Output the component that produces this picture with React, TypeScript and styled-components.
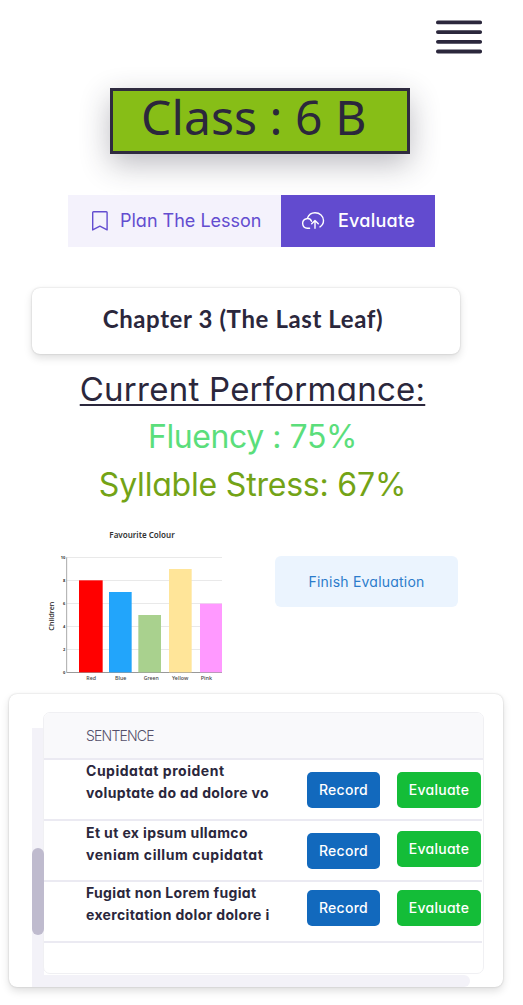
import React from 'react';
import styled, { createGlobalStyle } from 'styled-components';

const ink = '#2b273c';

const GlobalStyle = createGlobalStyle`
  *, *::before, *::after { box-sizing: border-box; }
  body {
    margin: 0;
    background: #fff;
    color: ${ink};
    font-family: Inter, "Liberation Sans", sans-serif;
    font-feature-settings: "cv11";
  }
  button { border: 0; padding: 0; font: inherit; font-feature-settings: inherit; cursor: pointer; }
`;

const Page = styled.main`
  width: 523px;
  height: 1005px;
  overflow: hidden;
  display: flex;
  flex-direction: column;
`;

const TopBar = styled.header`
  height: 88px;
  padding: 19px 39px 0 0;
  display: flex;
  justify-content: flex-end;
  align-items: flex-start;
`;

const MenuButton = styled.button`
  background: none;
  line-height: 0;
`;

const ClassBadge = styled.h1`
  margin: 0 0 0 110px;
  width: 300px;
  height: 66px;
  padding: 0 0 0 28px;
  border: 3px solid #2f2b3f;
  background: #87be17;
  box-shadow: 0 10px 30px rgba(47, 43, 63, 0.32);
  font: 400 48px/52px "Noto Sans", sans-serif;
  letter-spacing: 0.08px;
  white-space: nowrap;
`;

const Tabs = styled.nav`
  display: flex;
  margin: 41px 0 0 68px;
  height: 52px;
  position: relative;
`;

const Tab = styled.button<{ $active?: boolean }>`
  display: flex;
  align-items: center;
  width: ${(p) => (p.$active ? 154 : 213)}px;
  padding-left: ${(p) => (p.$active ? 20 : 23)}px;
  gap: ${(p) => (p.$active ? 13 : 11)}px;
  color: ${(p) => (p.$active ? '#fff' : '#634dd0')};
  background: ${(p) => (p.$active ? '#624bcf' : '#f4f2fc')};
  font-size: 18px;
  font-weight: ${(p) => (p.$active ? 500 : 400)};
  letter-spacing: ${(p) => (p.$active ? 0.25 : 0)}px;
  white-space: nowrap;
`;

const TabLabel = styled.span`
  padding-bottom: 1px;
`;

const Card = styled.section`
  background: #fff;
  border-radius: 8px;
  box-shadow: 0 0 2px rgba(0, 0, 0, 0.2), 0 4px 8px rgba(0, 0, 0, 0.13);
`;

const ChapterCard = styled(Card)`
  margin: 41px 0 0 32px;
  width: 428px;
  height: 66px;
  padding-right: 6px;
  font: 700 24px/62px Lato, sans-serif;
  letter-spacing: 0.6px;
  text-align: center;
`;

const Performance = styled.section`
  margin: 11px 0 0;
  padding-right: 18px;
  height: 144px;
`;

const Stat = styled.p<{ $color: string; $tracking: number; $size?: number; $underline?: boolean }>`
  margin: 0;
  text-align: center;
  font-size: ${(p) => p.$size ?? 32}px;
  line-height: 48px;
  font-weight: 400;
  color: ${(p) => p.$color};
  letter-spacing: ${(p) => p.$tracking}px;
  text-decoration: ${(p) => (p.$underline ? 'underline' : 'none')};
  text-decoration-thickness: 2px;
  text-underline-offset: 3px;
  text-decoration-skip-ink: none;
`;

const Summary = styled.section`
  display: flex;
  align-items: flex-start;
  margin-top: 11px;
  padding-left: 40px;
  height: 174px;
`;

const Chart = styled.svg`
  width: 200px;
  height: 170px;
  flex: none;
  font-family: "Noto Sans", sans-serif;
`;

const FinishButton = styled.button`
  margin: 36px 0 0 35px;
  width: 183px;
  height: 51px;
  padding-bottom: 1px;
  border-radius: 6px;
  background: #ebf4fe;
  color: #2b7ccb;
  font-size: 14px;
  letter-spacing: 0.22px;
`;

const TableCard = styled(Card)`
  margin-left: 9px;
  width: 494px;
  height: 293px;
  padding-left: 23px;
  overflow: hidden;
  display: grid;
  grid-template-columns: 11px 441px;
  grid-template-rows: 281px 12px;
`;

const VerticalTrack = styled.div`
  width: 12px;
  margin-top: 34px;
  padding-top: 120px;
  background: #f3f2f8;
`;

const Thumb = styled.div`
  position: relative;
  z-index: 2;
  height: 87px;
  border-radius: 6px;
  background: #bfbbce;
`;

const HorizontalTrack = styled.div`
  grid-column: 1 / -1;
  width: 438px;
  height: 12px;
  border-radius: 0 6px 6px 0;
  background: #f3f2f8;
`;

const Table = styled.div`
  z-index: 1;
  margin-top: 18px;
  height: 262px;
  border: 1px solid #f0f0f3;
  border-radius: 7px;
  background: #fff;
  overflow: hidden;
`;

const HeadRow = styled.div`
  height: 47px;
  padding-left: 42px;
  background: #f9f9fb;
  border-bottom: 2px solid #ebeaf2;
  color: #55506a;
  font-size: 14px;
  font-weight: 300;
  line-height: 46px;
  letter-spacing: -0.8px;
`;

const BodyRow = styled.div`
  display: grid;
  grid-template-columns: 221px 90px 84px;
  align-items: start;
  width: 438px;
  height: 61px;
  padding-left: 42px;
  border-bottom: 2px solid #ebeaf2;
`;

const Sentence = styled.div<{ $top: number }>`
  padding-top: ${(p) => p.$top}px;
  font-size: 14px;
  font-weight: 700;
  line-height: 22px;
  white-space: nowrap;
`;

const Line = styled.div<{ $tracking: number }>`
  letter-spacing: ${(p) => p.$tracking}px;
`;

const Action = styled.button<{ $kind: 'record' | 'evaluate'; $top: number }>`
  margin-top: ${(p) => p.$top}px;
  width: ${(p) => (p.$kind === 'record' ? 73 : 84)}px;
  height: 36px;
  padding-bottom: 1px;
  border-radius: 5px;
  background: ${(p) => (p.$kind === 'record' ? '#1269bd' : '#14bd38')};
  color: #fff;
  font-size: 14px;
  font-weight: 500;
  letter-spacing: 0.28px;
`;

const bars = [
  { name: 'Red', x: 117, w: 71, y: 181, fill: '#ff0000', lx: 139, lw: 29 },
  { name: 'Blue', x: 207, w: 68, y: 216, fill: '#22a5fb', lx: 225, lw: 34 },
  { name: 'Green', x: 295, w: 68, y: 285, fill: '#a9d18e', lx: 311, lw: 45 },
  { name: 'Yellow', x: 387, w: 68, y: 147, fill: '#ffe599', lx: 396, lw: 49 },
  { name: 'Pink', x: 480, w: 66, y: 251, fill: '#ff99ff', lx: 482, lw: 34 },
];

const rows = [
  { lines: [['Cupidatat proident', 0.52], ['voluptate do ad dolore vo', 0.37]], text: 0, record: 12, evaluate: 12 },
  { lines: [['Et ut ex ipsum ullamco', 0.38], ['veniam cillum cupidatat', 0.56]], text: 1, record: 12, evaluate: 10 },
  { lines: [['Fugiat non Lorem fugiat', 0.33], ['exercitation dolor dolore i', 0.34]], text: 0, record: 8, evaluate: 8 },
] as { lines: [string, number][]; text: number; record: number; evaluate: number }[];

function ColourChart() {
  return (
    <Chart viewBox="0 0 600 510">
      {[0, 2, 4, 6, 8, 10].map((n) => {
        const y = 457.5 - n * 34.5;
        return (
          <g key={n}>
            <path d={`M80 ${y}H546`} stroke={n ? '#e9e9e9' : '#999'} strokeWidth="3" />
            <text x="76" y={y + 5} textAnchor="end" fontSize="12" fontWeight="700" fill="#333">
              {n}
            </text>
          </g>
        );
      })}
      <path d="M80 112V458" stroke="#aaa" strokeWidth="3" />
      {bars.map((b) => (
        <g key={b.name}>
          <rect x={b.x} y={b.y} width={b.w} height={457 - b.y} fill={b.fill} />
          <text x={b.lx} y="479" fontSize="16" fontWeight="500" textLength={b.lw} lengthAdjust="spacingAndGlyphs" fill="#444">
            {b.name}
          </text>
        </g>
      ))}
      <text x="208" y="54" fontSize="26" fontWeight="600" textLength="196" lengthAdjust="spacingAndGlyphs" fill="#333">
        Favourite Colour
      </text>
      <text transform="translate(42 332) rotate(-90)" fontSize="23" fontWeight="500" textLength="87" lengthAdjust="spacingAndGlyphs" fill="#222">
        Children
      </text>
    </Chart>
  );
}

export default function App() {
  return (
    <Page>
      <GlobalStyle />
      <TopBar>
        <MenuButton aria-label="Menu">
          <svg width="50" height="36" fill="none" stroke={ink} strokeWidth="3.8" strokeLinecap="round">
            <path d="M3.9 3.4H46.2M3.9 13.1H46.2M3.9 22.8H46.2M3.9 32.5H46.2" />
          </svg>
        </MenuButton>
      </TopBar>
      <ClassBadge>Class : 6 B</ClassBadge>
      <Tabs>
        <Tab>
          <svg width="18" height="20" fill="none" stroke="currentColor" strokeWidth="1.4" strokeLinejoin="round">
            <path d="M1.7 1.5Q1.7.7 2.5.7H15.3Q16.1.7 16.1 1.5V18.9L8.9 15.2L1.7 18.9Z" />
          </svg>
          <TabLabel>Plan The Lesson</TabLabel>
        </Tab>
        <Tab $active>
          <svg width="24" height="20" fill="none" stroke="currentColor" strokeWidth="1.4" strokeLinecap="round" strokeLinejoin="round">
            <path d="M8.6 17.2H6.3A4.8 4.8 0 0 1 5.5 7.7C8 7.2 9.8 8.5 10.5 10.3M6.3 7.4C7.6 3.7 10.4 1.7 14 1.7C18.8 1.7 22.5 5.1 22.5 9.6C22.5 12.4 21.2 14.6 19 15.9M14 17.2V9.5M10.7 12.7L14 9.4L17.3 12.7" />
          </svg>
          <TabLabel>Evaluate</TabLabel>
        </Tab>
      </Tabs>
      <ChapterCard>Chapter 3 (The Last Leaf)</ChapterCard>
      <Performance>
        <Stat $color={ink} $tracking={0.25} $size={33} $underline>Current Performance:</Stat>
        <Stat $color="#5bde7b" $tracking={-0.45}>Fluency : 75%</Stat>
        <Stat $color="#73a316" $tracking={-0.2}>Syllable Stress: 67%</Stat>
      </Performance>
      <Summary>
        <ColourChart />
        <FinishButton>Finish Evaluation</FinishButton>
      </Summary>
      <TableCard>
        <VerticalTrack>
          <Thumb />
        </VerticalTrack>
        <Table>
          <HeadRow>SENTENCE</HeadRow>
          {rows.map((row) => (
            <BodyRow key={row.lines[0][0]}>
              <Sentence $top={row.text}>
                {row.lines.map(([text, tracking]) => (
                  <Line key={text} $tracking={tracking}>{text}</Line>
                ))}
              </Sentence>
              <Action $kind="record" $top={row.record}>Record</Action>
              <Action $kind="evaluate" $top={row.evaluate}>Evaluate</Action>
            </BodyRow>
          ))}
        </Table>
        <HorizontalTrack />
      </TableCard>
    </Page>
  );
}
